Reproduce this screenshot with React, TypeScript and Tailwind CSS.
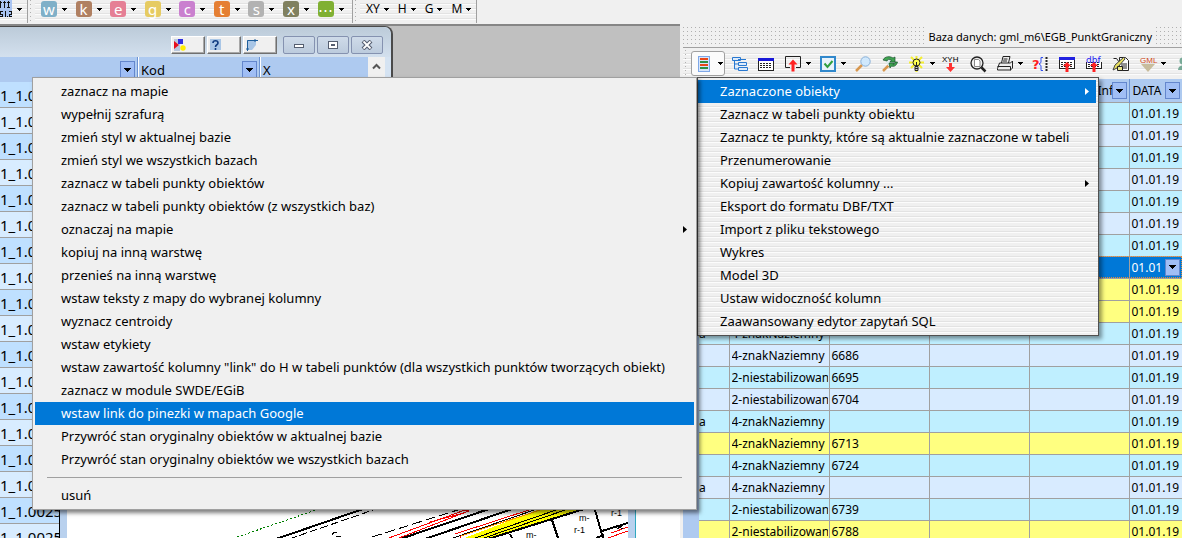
import type { ReactNode } from "react";

interface MenuItem {
  label: string;
  submenu?: boolean;
  active?: boolean;
}

interface PointRow {
  kind: string;
  number: string;
  color: string;
  prefix?: string;
  selected?: boolean;
}

const objectMenu: MenuItem[] = [
  { label: "zaznacz na mapie" },
  { label: "wypełnij szrafurą" },
  { label: "zmień styl w aktualnej bazie" },
  { label: "zmień styl we wszystkich bazach" },
  { label: "zaznacz w tabeli punkty obiektów" },
  { label: "zaznacz w tabeli punkty obiektów (z wszystkich baz)" },
  { label: "oznaczaj na mapie", submenu: true },
  { label: "kopiuj na inną warstwę" },
  { label: "przenieś na inną warstwę" },
  { label: "wstaw teksty z mapy do wybranej kolumny" },
  { label: "wyznacz centroidy" },
  { label: "wstaw etykiety" },
  {
    label:
      'wstaw zawartość kolumny "link" do H w tabeli punktów (dla wszystkich punktów tworzących obiekt)',
  },
  { label: "zaznacz w module SWDE/EGiB" },
  { label: "wstaw link do pinezki w mapach Google", active: true },
  { label: "Przywróć stan oryginalny obiektów w aktualnej bazie" },
  { label: "Przywróć stan oryginalny obiektów we wszystkich bazach" },
];

const mainMenu: MenuItem[] = [
  { label: "Zaznaczone obiekty", submenu: true, active: true },
  { label: "Zaznacz w tabeli punkty obiektu" },
  { label: "Zaznacz te punkty, które są aktualnie zaznaczone w tabeli" },
  { label: "Przenumerowanie" },
  { label: "Kopiuj zawartość kolumny ...", submenu: true },
  { label: "Eksport do formatu DBF/TXT" },
  { label: "Import z pliku tekstowego" },
  { label: "Wykres" },
  { label: "Model 3D" },
  { label: "Ustaw widoczność kolumn" },
  { label: "Zaawansowany edytor zapytań SQL" },
];

const CYAN = "bg-[#bfefff]";
const LIGHT = "bg-[#d8ebff]";
const YELLOW = "bg-[#ffff80]";

const rows: PointRow[] = [
  { kind: "", number: "", color: CYAN },
  { kind: "", number: "", color: LIGHT },
  { kind: "", number: "", color: CYAN },
  { kind: "", number: "", color: LIGHT },
  { kind: "", number: "", color: CYAN },
  { kind: "", number: "", color: LIGHT },
  { kind: "", number: "", color: CYAN },
  { kind: "", number: "", color: "bg-[#0078d7]", selected: true },
  { kind: "", number: "", color: YELLOW },
  { kind: "", number: "", color: YELLOW },
  { kind: "4-znakNaziemny", number: "", color: CYAN, prefix: "a" },
  { kind: "4-znakNaziemny", number: "6686", color: LIGHT },
  { kind: "2-niestabilizowany", number: "6695", color: CYAN },
  { kind: "2-niestabilizowany", number: "6704", color: LIGHT },
  { kind: "4-znakNaziemny", number: "", color: CYAN, prefix: "a" },
  { kind: "4-znakNaziemny", number: "6713", color: YELLOW },
  { kind: "4-znakNaziemny", number: "6724", color: CYAN },
  { kind: "4-znakNaziemny", number: "", color: LIGHT, prefix: "a" },
  { kind: "2-niestabilizowany", number: "6739", color: CYAN },
  { kind: "2-niestabilizowany", number: "6788", color: YELLOW },
];

const letters = [
  { letter: "w", color: "bg-[#7fb0c8]" },
  { letter: "k", color: "bg-[#b08062]" },
  { letter: "e", color: "bg-[#e57f95]" },
  { letter: "g", color: "bg-[#e6cb62]" },
  { letter: "c", color: "bg-[#ca80cf]" },
  { letter: "t", color: "bg-[#e57f33]" },
  { letter: "s", color: "bg-[#b2b2b2]" },
  { letter: "x", color: "bg-[#80805f]" },
  { letter: "⋯", color: "bg-[#80b033]" },
];

const stripes =
  "bg-[repeating-linear-gradient(to_bottom,#f0f0f0_0px,#f0f0f0_3px,#e3e3e3_3px,#e3e3e3_4px,#fcfcfc_4px,#fcfcfc_5px)]";
const dots =
  "bg-[radial-gradient(circle_at_12.5%_12.5%,#b0b0b0_1px,transparent_1px)] bg-[size:4px_4px]";

const Caret = () => (
  <svg width="5" height="3" className="shrink-0" shapeRendering="crispEdges" aria-hidden="true">
    <path d="M0 0h5v1h-1v1h-1v1h-1v-1h-1v-1h-1z" fill="#000" />
  </svg>
);

const Grip = () => <div className={`w-1 shrink-0 self-stretch ${dots}`} />;

const DropButton = () => (
  <button
    aria-label="Filtr"
    className="flex h-[17px] w-[15px] shrink-0 items-center justify-center border border-[#6487cd] bg-[#a0bef5]"
  >
    <svg width="7" height="4" shapeRendering="crispEdges" aria-hidden="true">
      <path d="M0 0h7v1h-1v1h-1v1h-1v1h-1v-1h-1v-1h-1v-1h-1z" fill="#000" />
    </svg>
  </button>
);

const TopToolbar = () => (
  <div className="flex h-6 shrink-0 items-start bg-[#f0f0f0]">
    <div className={`flex h-[23px] w-7 items-start border-r border-[#a0a0a0] ${stripes}`}>
      <button aria-label="Skala" className="flex items-center gap-1">
        <svg width="13" height="18" shapeRendering="crispEdges" aria-hidden="true">
          <rect width="12" height="17" fill="#a9c4f2" />
          <g fill="none" stroke="#111">
            <path d="M0 2.500h2M0 1v7M3 2.500h3M4.500 1v7M8.500 1v7M7 2.500h3M7 7.500h3" />
            <path d="M0 11.500h3M0.500 11v3h2v3M0 16.500h3M5.500 11v6M7 16.500h1M9 11.500h3M11.500 11v3h-2v3M9 16.500h3" />
          </g>
        </svg>
        <Caret />
      </button>
    </div>
    <div className="flex h-[23px] w-[7px] justify-center">
      <Grip />
    </div>
    <div className={`flex h-[23px] w-[318px] items-start border-r border-[#a0a0a0] pt-px pl-[6px] ${stripes}`}>
      {letters.map(({ letter, color }) => (
        <button key={letter} className="flex w-[35px] items-center gap-[5px]">
          <span
            className={`flex size-4 items-center justify-center rounded-[3px] font-['Noto_Sans',sans-serif] text-[15px] leading-4 text-white ${color}`}
          >
            {letter}
          </span>
          <Caret />
        </button>
      ))}
    </div>
    <div className="flex h-[23px] w-[7px] justify-center">
      <Grip />
    </div>
    <div className={`flex h-[23px] w-[117px] items-start gap-[9px] border-r border-[#a0a0a0] pl-[6px] text-[12px] leading-[18px] ${stripes}`}>
      {["XY", "H", "G", "M"].map((label) => (
        <button key={label} className="flex items-center gap-1">
          {label}
          <Caret />
        </button>
      ))}
    </div>
  </div>
);

const WindowButton = ({ label, children }: { label: string; children: ReactNode }) => (
  <button
    aria-label={label}
    className="flex h-[18px] w-8 items-center justify-center rounded-[2px] border border-[#8592b0] bg-linear-to-b from-[#cfdbe9] to-[#bccbdd]"
  >
    <svg width="12" height="10" aria-hidden="true">
      {children}
    </svg>
  </button>
);

const ToolTab = ({ label, children }: { label: string; children: ReactNode }) => (
  <button
    aria-label={label}
    className="h-[18px] w-[34px] border border-t-white border-r-[#707070] border-b-[#707070] border-l-white bg-[#f0f0f0] pl-[2px] shadow-[inset_-1px_-1px_#a8a8a8]"
  >
    <svg width="12" height="12" className="block" aria-hidden="true">
      {children}
    </svg>
  </button>
);

const ObjectWindow = () => (
  <div className="flex h-14 w-[393px] shrink-0 flex-col rounded-tr-lg border-t border-r-2 border-[#4a4a4a] bg-[#d5e3f2]">
    <div className="flex h-[30px] shrink-0 items-center rounded-tr-lg bg-linear-to-b from-[#bccbd9] to-[#d3e0ee] pt-[6px] pl-[171px]">
      <div className="flex gap-[2px]">
        <ToolTab label="Kolory">
          <path d="M0 0h6v12h-6z" fill="#b9c8de" />
          <path d="M0 2l5 4-5 4z" fill="#e8101c" />
          <rect x="4" width="5" height="5" fill="#2f2fe0" />
          <circle cx="9" cy="9" r="2.7" fill="#ffee00" />
        </ToolTab>
        <ToolTab label="Pomoc">
          <rect width="11" height="11" fill="#a9c6e6" />
          <path d="M3 4c0-3 5-3 5 0 0 2-2.500 1.500-2.500 4M5.500 9v2" stroke="#103c80" strokeWidth="1.600" fill="none" />
        </ToolTab>
        <ToolTab label="Układ">
          <path d="M1 1h9v5l-4 5h-5z" fill="#a9c6e6" />
          <path d="M1.500 12v-10.500H12M9 0v3M0 10h3" stroke="#1f5f9c" fill="none" />
        </ToolTab>
      </div>
      <div className="ml-[6px] flex gap-[2px]">
        <WindowButton label="Minimalizuj">
          <rect x="1.500" y="4.500" width="9" height="3" fill="#fff" stroke="#555e70" />
        </WindowButton>
        <WindowButton label="Maksymalizuj">
          <rect x="1.500" y="1.500" width="9" height="7" fill="#fff" stroke="#555e70" />
          <rect x="4.500" y="4.500" width="3" height="1" fill="#fff" stroke="#555e70" />
        </WindowButton>
        <WindowButton label="Zamknij">
          <path d="M2 1l8 8M10 1l-8 8" stroke="#555e70" strokeWidth="4" />
          <path d="M2.500 1.500l7 7M9.500 1.500l-7 7" stroke="#fff" strokeWidth="1.800" />
        </WindowButton>
      </div>
    </div>
    <div className="flex min-h-0 flex-1 bg-[#aecaf0] text-[13px] leading-[26px]">
      <div className="flex w-[138px] items-start justify-end border-r border-[#6c92d2] pt-1 pr-[2px]">
        <DropButton />
      </div>
      <div className="flex w-[122px] justify-between border-r border-l border-r-[#6c92d2] border-l-white pr-[2px] pl-[2px]">
        Kod
        <span className="flex items-start pt-1">
          <DropButton />
        </span>
      </div>
      <div className="flex-1 border-l border-white pl-[2px]">X</div>
      <div className="flex w-[17px] justify-center bg-[#f0f0f0] pt-[6px]">
        <svg width="9" height="7" aria-hidden="true">
          <path d="M1 5.500l3.500-3.500 3.500 3.500" stroke="#555" strokeWidth="2" fill="none" />
        </svg>
      </div>
      <div className="w-[6px] bg-[#d5e3f2]" />
    </div>
  </div>
);

const IdList = () => (
  <ul className="w-[60px] shrink-0 overflow-hidden border-r border-black text-[15px] leading-[27px]">
    {Array.from({ length: 18 }, (_, i) => (
      <li
        key={i}
        className={`h-[26px] overflow-hidden border-b border-[#a0a0a0] whitespace-nowrap ${
          i % 2 ? "bg-[#d8ecff]" : "bg-[#bfe0ff]"
        }`}
      >
        1_1.0025
      </li>
    ))}
  </ul>
);

// Only the bottom strip of the map is left uncovered by the menu
const MapView = () => (
  <div className="flex flex-1 items-end overflow-hidden bg-white">
    <svg width="561" height="30" viewBox="67 508 561 30" className="shrink-0" shapeRendering="crispEdges" aria-label="Mapa">
      <path d="M462 539L540 509H582L485 539z" fill="#ff0" />
      <g fill="none" stroke="#000">
        <path d="M237 537L322 508" stroke="#008000" strokeDasharray="2 2" />
        <path d="M276 539L366 508M400 539L492 508M425 539L515 508" strokeWidth="2" />
        <path d="M289 539L379 508" strokeDasharray="8 3" />
        <path d="M372 537L464 508" strokeDasharray="10 4" />
        <path d="M332 535l2-3h3m-1 4h5" />
        <path d="M386 539L465 510l4 1-8 3-62 24M430 522l30-8 9-3" stroke="#f00" />
        <path d="M455 534L535 508M460 539v-4" stroke="#f00" />
        <path d="M450 539L540 508" />
        <path d="M461 536L546 508" stroke="#ff9000" />
        <path d="M472 539L562 508" />
        <path d="M481 539L571 508" />
        <path d="M488 539L584 509M510 534l2 4" strokeWidth="2" />
        <path d="M552 520l6 18M595 510l8 28M602 531l26-8M596 538l8-3" strokeWidth="2" />
        <path d="M611 533l17-6M608 538l20-7" stroke="#f00" />
        <path d="M617 529l6-4M618 526l5 3" />
      </g>
      <g className="font-['Liberation_Sans',sans-serif] text-[9px]">
        <text x="579" y="521">m-</text>
        <text x="526" y="538">m-</text>
        <text x="574" y="533">r-1</text>
        <text x="611" y="516">r-1</text>
      </g>
    </svg>
  </div>
);

const Workspace = () => (
  <div className="flex w-[680px] shrink-0 flex-col overflow-hidden border-t-2 border-[#868686] bg-[#c0c0c0]">
    <ObjectWindow />
    <div className="flex min-h-0 flex-1 overflow-hidden">
      <IdList />
      <div className="w-[7px] bg-[#b9d1ee]" />
      <MapView />
      <div className="w-2 border-r border-[#30a8c0] bg-[#b9d1ee]" />
      <div className="w-11 bg-white" />
    </div>
  </div>
);

const ToolButton = ({
  label,
  width = "w-4",
  caret = false,
  children,
}: {
  label: string;
  width?: string;
  caret?: boolean;
  children: ReactNode;
}) => (
  <button aria-label={label} className={`flex shrink-0 items-center gap-[5px] ${width}`}>
    <svg width="16" height="16" className="shrink-0 overflow-visible" aria-hidden="true">
      {children}
    </svg>
    {caret && <Caret />}
  </button>
);

const PanelToolbar = () => (
  <div className={`flex h-[27px] shrink-0 items-center overflow-hidden ${stripes}`}>
    <div className="flex w-2 shrink-0 justify-center self-stretch">
      <Grip />
    </div>
    <button
      aria-label="Menu"
      className="flex h-[25px] w-[34px] shrink-0 items-center gap-2 rounded-[3px] border border-[#a0a0a0] bg-[#fbfbfb] pl-[6px]"
    >
      <svg width="12" height="16" shapeRendering="crispEdges" aria-hidden="true">
        <rect x="0.500" y="0.500" width="11" height="15" fill="#d8e6fb" stroke="#7fa8e8" />
        <path d="M2 3h8M2 9h8" stroke="#e84818" strokeWidth="2" />
        <path d="M2 6h8M2 12h8" stroke="#309048" strokeWidth="2" />
      </svg>
      <Caret />
    </button>
    <div className="ml-[7px] flex shrink-0 items-center">
      <ToolButton label="Drzewo" width="w-[26px]">
        <path d="M0.500 1.500h8v3h-8zM6.500 6.500h8v3h-8zM6.500 11.500h9v3h-9zM6 3.500h8M2.500 5v8h4M2.500 8h4" fill="#dcebfc" stroke="#2878d0" />
      </ToolButton>
      <ToolButton label="Tabela" width="w-[27px]">
        <g shapeRendering="crispEdges">
          <rect x="0.500" y="2.500" width="15" height="12" fill="#fff" stroke="#222" />
          <rect x="0" y="2" width="16" height="3" fill="#1818d8" />
          <path d="M2 7.500h12M2 9.500h12M2 11.500h12" stroke="#222" strokeDasharray="2 1" />
        </g>
      </ToolButton>
      <ToolButton label="Wyślij" width="w-[35px]" caret>
        <path d="M5 11.500h-4.500v-11h15v11h-4.500" fill="none" stroke="#222" />
        <path d="M8 3.500l4.500 5h-3v7h-3v-7h-3z" fill="#f22" />
      </ToolButton>
      <ToolButton label="Zaznacz" width="w-[35px]" caret>
        <rect x="1" y="1" width="14" height="14" fill="#e8f3fb" stroke="#3088cc" strokeWidth="2" />
        <path d="M4.500 7.500l3 3.500 5-6" fill="none" stroke="#30a040" strokeWidth="2" />
      </ToolButton>
      <ToolButton label="Szukaj" width="w-[27px]">
        <path d="M1 15l6-6" stroke="#d89850" strokeWidth="2.500" />
        <circle cx="10.500" cy="5.500" r="4.700" fill="#d0e8fc" stroke="#88b0d8" />
      </ToolButton>
      <ToolButton label="Zamień" width="w-[27px]">
        <path d="M1 15l6-6" stroke="#d89850" strokeWidth="2.500" />
        <circle cx="9" cy="6" r="4.500" fill="#dcecf0" />
        <path d="M1 4c2-4 7-4 10-2l2-1v5h-5l1.500-2c-2-1-4-1-4.500 1z" fill="#3fa450" stroke="#18502c" strokeWidth="0.700" />
        <path d="M15.500 6c-1 4-4 5-6 4l-1.500 2-1-5h5l-1 1.500c1 0 2-1 2-2.500z" fill="#3fa450" stroke="#18502c" strokeWidth="0.700" />
      </ToolButton>
      <ToolButton label="Podpowiedź" width="w-[34px]" caret>
        <path d="M7.500 0v16M0 6.500h15M2 1l11 11M13 1l-11 11" stroke="#f4ee30" strokeWidth="2" />
        <circle cx="7.500" cy="6.500" r="3.500" fill="#ffff50" stroke="#222" />
        <path d="M6 10.500h3v4h-3zM6 12.500h3M7.500 6v4" fill="#ccc" stroke="#222" />
      </ToolButton>
      <ToolButton label="XYH" width="w-[27px]">
        <text x="-1" y="6" className="font-['Liberation_Sans',sans-serif] text-[8px]">
          XYH
        </text>
        <path d="M6 7h3v4h3l-4.500 5-4.500-5h3z" fill="#f33" />
      </ToolButton>
      <ToolButton label="Podgląd" width="w-[27px]">
        <circle cx="7" cy="7" r="6" fill="#eee" stroke="#222" strokeWidth="1.300" />
        <path d="M4.500 3.500h4l1.500 1.500v5.500h-5.500z" fill="#fff" stroke="#888" />
        <path d="M11.500 11.500l4 4" stroke="#222" strokeWidth="2.500" />
      </ToolButton>
      <ToolButton label="Drukuj" width="w-[35px]" caret>
        <path d="M4.500 7l1.500-6.500h7l-1.500 6.500M6.500 3h4M6 5h4M0.500 12.500l2-5.500h11l2-2v7l-2 2h-13zM0.500 10.500h13v4" fill="#eee" stroke="#222" />
      </ToolButton>
      <ToolButton label="Zapytanie" width="w-[27px]">
        <text x="0" y="13" fill="#f22" className="font-['DejaVu_Sans',sans-serif] text-[13px] font-bold">
          ?
        </text>
        <path d="M11 1.500h-2v5l-2 1.500 2 1.500v5h2" fill="none" stroke="#3050f0" />
        <path d="M14.500 1v14" stroke="#222" strokeWidth="2" strokeDasharray="2 1" />
      </ToolButton>
      {["Import", "Import DBF"].map((label, i) => (
        <ToolButton key={label} label={label} width="w-[27px]">
          <g shapeRendering="crispEdges">
            <path d="M0.500 1.500h15v11h-15z" fill="#fff" stroke="#222" />
            <path d="M2 6.500h12M2 8.500h12M2 10.500h12" stroke="#222" strokeDasharray="2 1" />
            {i === 0 && <path d="M0 2.500h16" stroke="#2020e0" strokeWidth="3" />}
            {i === 1 && <path d="M0 0h16v6h-16z" fill="#f0f0f0" />}
          </g>
          {i === 1 && (
            <text x="0" y="7" fill="#2020f0" className="font-['DejaVu_Sans',sans-serif] text-[9px]">
              dbf
            </text>
          )}
          <path d="M8 6l4 4h-2.500v6h-3v-6h-2.500z" fill="#f22" />
        </ToolButton>
      ))}
      <ToolButton label="Edycja" width="w-[27px]">
        <path d="M6.500 1.500h6l3 3v10h-9z" fill="#fff" stroke="#222" />
        <path d="M0.500 2.500h3l3 4M8 8h6M8 10h6M8 12h6" fill="none" stroke="#222" />
        <path d="M2 9l9-8 1 2-8 9-4 2z" fill="#e8e060" stroke="#444" />
        <path d="M4.500 10.500h5v4h-5z" fill="#ece88c" stroke="#222" />
      </ToolButton>
      <ToolButton label="GML" width="w-[38px]" caret>
        <path d="M1 8h14l-7 8z" fill="#c8bc9c" />
        <text x="0" y="7" fill="#d04818" className="font-['Liberation_Sans',sans-serif] text-[8px]">
          GML
        </text>
      </ToolButton>
      <ToolButton label="Użytkownik">
        <circle cx="5" cy="5" r="3.500" fill="#78aa98" />
        <path d="M0 14c0-6 10-6 10 0z" fill="#78aa98" />
      </ToolButton>
    </div>
  </div>
);

const PointTable = () => (
  <div className="flex min-h-0 flex-1 overflow-hidden">
    <div className="w-4 shrink-0 bg-[#aecaf0]" />
    <table className="h-fit w-full min-w-[483px] table-fixed border-collapse text-[12px] leading-[21px]">
      <colgroup>
        <col className="w-[30px]" />
        <col className="w-[100px]" />
        <col className="w-[100px]" />
        <col className="w-[100px]" />
        <col className="w-[100px]" />
        <col />
      </colgroup>
      <thead>
        <tr className="h-[23px] bg-[#aecaf0] text-left">
          <th />
          <th />
          <th />
          <th />
          <th className="border-r border-[#6c92d2] p-0 pt-px font-normal">
            <div className="flex items-center justify-end pr-[2px]">
              <span className="w-[14px] overflow-hidden">Inf</span>
              <DropButton />
            </div>
          </th>
          <th className="p-0 pt-px pl-[3px] font-normal">
            <div className="flex items-center gap-px">
              <span className="w-[31px]">DATA</span>
              <DropButton />
            </div>
          </th>
        </tr>
      </thead>
      <tbody>
        {rows.map((row, i) => (
          <tr
            key={i}
            className={`${row.color} ${
              row.selected
                ? "text-white outline-1 -outline-offset-1 outline-[#e08a3c] outline-dotted"
                : "text-black"
            }`}
          >
            <td className="h-[22px] border border-l-0 border-[#a0a0a0] p-0">
              <div>{row.prefix}</div>
            </td>
            <td className="border border-[#a0a0a0] p-0 pr-px pl-[2px]">
              <div className="overflow-hidden whitespace-nowrap">{row.kind}</div>
            </td>
            <td className="border border-[#a0a0a0] p-0 pl-[2px]">{row.number}</td>
            <td className="border border-[#a0a0a0] p-0" />
            <td className="border border-[#a0a0a0] p-0" />
            <td className="border border-r-0 border-[#a0a0a0] p-0 pl-[2px] whitespace-nowrap">
              {row.selected ? (
                <div className="flex items-center gap-[3px]">
                  <span>01.01</span>
                  <DropButton />
                </div>
              ) : (
                "01.01.19"
              )}
            </td>
          </tr>
        ))}
      </tbody>
    </table>
  </div>
);

const DatabasePanel = () => (
  <div className="flex min-w-0 flex-1 flex-col bg-[#f0f0f0] pl-[3px]">
    <div className="mt-[2px] flex h-[22px] shrink-0 items-center border-b border-[#a0a0a0]">
      <div className={`h-5 flex-1 ${dots}`} />
      <h1 className="px-1 text-[11px] leading-5">Baza danych: gml_m6\EGB_PunktGraniczny</h1>
      <div className={`h-5 w-[26px] ${dots}`} />
    </div>
    <div className="flex min-h-0 flex-1 flex-col pt-[2px]">
      <PanelToolbar />
      <div className="h-[2px] shrink-0" />
      <PointTable />
    </div>
  </div>
);

const MenuEntry = ({ label, submenu, active }: MenuItem) => (
  <li role="none">
    <button
      role="menuitem"
      className={`flex h-[23px] w-full items-center justify-between pr-[7px] text-left whitespace-nowrap ${
        active ? "bg-[#0078d7] text-white" : ""
      }`}
    >
      {label}
      {submenu && (
        <svg width="4" height="7" fill="currentColor" aria-hidden="true">
          <path d="M0 0l4 3.500-4 3.500z" />
        </svg>
      )}
    </button>
  </li>
);

const App = () => {
  return (
    <div className="relative flex h-screen flex-col overflow-hidden bg-[#f0f0f0] font-['Noto_Sans','Open_Sans',sans-serif] text-black">
      <TopToolbar />
      <div className="flex min-h-0 flex-1">
        <Workspace />
        <DatabasePanel />
      </div>

      <ul
        role="menu"
        className={`absolute top-[77px] left-[697px] w-[402px] border border-[#505050] py-[2px] pr-[2px] text-[13px] shadow-[3px_3px_4px_rgba(0,0,0,0.4)] [&_button]:pl-[22px] ${stripes}`}
      >
        {mainMenu.map((item) => (
          <MenuEntry key={item.label} {...item} />
        ))}
      </ul>

      <ul
        role="menu"
        className="absolute top-[77px] left-[32px] w-[665px] border border-[#a0a0a0] bg-[#f0f0f0] p-[2px] text-[13px] shadow-[3px_3px_4px_rgba(0,0,0,0.5)] [&_button]:pl-[26px]"
      >
        {objectMenu.map((item) => (
          <MenuEntry key={item.label} {...item} />
        ))}
        <li role="separator" className="mx-3 my-[6px] border-t border-[#a0a0a0]" />
        <MenuEntry label="usuń" />
      </ul>
    </div>
  );
};

export default App;
